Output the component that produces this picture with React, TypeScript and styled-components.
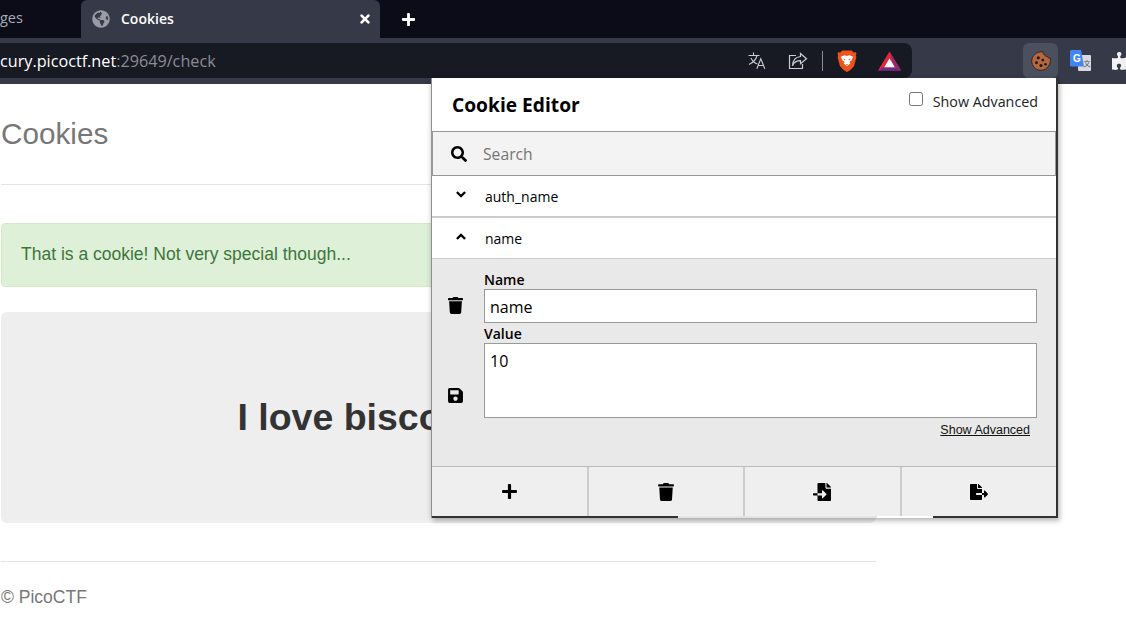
import styled, { createGlobalStyle } from "styled-components";
import {
  FaAngleDown,
  FaAngleUp,
  FaFileExport,
  FaFileImport,
  FaGlobeAmericas,
  FaPlus,
  FaPuzzlePiece,
  FaSave,
  FaSearch,
  FaTimes,
  FaTrash,
} from "react-icons/fa";

const GlobalStyle = createGlobalStyle`
  html, body {
    margin: 0;
    padding: 0;
    background: #fff;
    overflow: hidden;
  }
  #root {
    width: 1126px;
    height: 622px;
    position: relative;
    overflow: hidden;
  }
`;

function TranslateIcon() {
  return (
    <svg width="18" height="17" viewBox="0 0 18 17" fill="none" stroke="#c9cbd1" strokeWidth="1.1">
      <path d="M.5 3.500h11M5.500.5v3M9 3.500c-1 4-3.500 7-8 9M3 6c1.200 2.800 3.500 5 6.300 6" />
      <path d="M8.800 16.700l4-10 4 10M10.200 13.500h5.300" />
    </svg>
  );
}

function ShareIcon() {
  return (
    <svg width="20" height="18" viewBox="0 0 20 18" fill="none" stroke="#c9cbd1" strokeWidth="1.2">
      <path d="M8 3.500H1.500v13h13v-4.500" />
      <path d="M12.500 1.500l6 5.200-6 5v-3c-4 0-6.500 1.500-8 5 .3-5 3-8.700 8-9.200z" />
    </svg>
  );
}

function BraveIcon() {
  return (
    <svg width="20" height="22" viewBox="0 0 21 23">
      <path
        d="M5.500.5h10l2 2.200 2.200-.3.800 1.100-.7 2 .5 2.300-2.400 9-3.500 3.800-3.900 2.400-3.900-2.400-3.500-3.800-2.400-9 .5-2.300-.7-2 .8-1.100 2.200.3z"
        fill="#f1511b"
      />
      <path
        d="M4 7l4-1.500 2.500.8 2.500-.8 4 1.500-1.800 4-2.200 1.500 1 1.500-3.500 3-3.500-3 1-1.500-2.200-1.500z"
        fill="#fff"
      />
      <path d="M6.500 9l2.300.6-.6 1.300zM14.500 9l-2.300.6.6 1.300zM9 15h3l-1.500 1.300z" fill="#f1511b" />
    </svg>
  );
}

function BatIcon() {
  return (
    <svg width="23" height="20" viewBox="0 0 24 20">
      <path d="M12 0L0 20h24z" fill="#e0283c" />
      <path d="M12 0l12 20-7-4.500z" fill="#8a2a80" />
      <path d="M0 20h24l-5-3H5z" fill="#662d91" />
      <path d="M12 7.500L6.500 16.500h11z" fill="#fff" />
    </svg>
  );
}

function CookieIcon() {
  return (
    <svg width="20" height="20" viewBox="0 0 22 22">
      <path
        d="M13 .8c-.4 1.700.7 3 2.200 3 .1 1.600 1.300 2.600 2.800 2.300.3 1.200 1.500 1.800 3.200 1.500 1.300 6.500-3.500 13.600-10.200 13.600C5 21.200.8 16.500.8 11 .8 5 6.500.2 13 .8z"
        fill="#b5673d"
        stroke="#2b2320"
        strokeWidth="1"
      />
      <circle cx="8" cy="7.500" r="1.700" fill="#1f1a18" />
      <circle cx="13" cy="10" r="1.600" fill="#1f1a18" />
      <circle cx="6" cy="13" r="1.600" fill="#1f1a18" />
      <circle cx="11" cy="16" r="1.700" fill="#1f1a18" />
      <circle cx="16" cy="14.500" r="1.400" fill="#1f1a18" />
    </svg>
  );
}

function GoogleTranslateIcon() {
  return (
    <svg width="22" height="22" viewBox="0 0 22 22">
      <rect x="8" y="5" width="13" height="16" rx="1" fill="#d8dade" />
      <path d="M1.500 0h9.500l3 16.500H1.500A1.500 1.500 0 0 1 0 15V1.500A1.500 1.500 0 0 1 1.500 0z" fill="#4285f4" />
      <text x="3" y="11.500" fontFamily="Liberation Sans, sans-serif" fontWeight="700" fontSize="10" fill="#fff">
        G
      </text>
      <text x="13.500" y="16" fontFamily="Noto Sans CJK SC, sans-serif" fontSize="7" fill="#555">
        文
      </text>
    </svg>
  );
}

export default function App() {
  return (
    <>
      <GlobalStyle />
      <Chrome>
        <TabStrip>
          <OtherTab>ges</OtherTab>
          <ActiveTab>
            <FaGlobeAmericas size={18} color="#9a9ca5" />
            <TabTitle>Cookies</TabTitle>
            <FaTimes size={14} color="#fff" />
          </ActiveTab>
          <NewTab>
            <FaPlus size={15} />
          </NewTab>
        </TabStrip>
        <Toolbar>
          <UrlBar>
            <UrlText>
              cury.picoctf.net<UrlDim>:29649/check</UrlDim>
            </UrlText>
            <UrlIcons>
              <UrlIcon $left={0}>
                <TranslateIcon />
              </UrlIcon>
              <UrlIcon $left={22}>
                <ShareIcon />
              </UrlIcon>
              <UrlDivider />
              <UrlIcon $left={14}>
                <BraveIcon />
              </UrlIcon>
              <UrlIcon $left={21}>
                <BatIcon />
              </UrlIcon>
            </UrlIcons>
          </UrlBar>
          <Extensions>
            <ExtensionButton $active>
              <CookieIcon />
            </ExtensionButton>
            <ExtensionButton>
              <GoogleTranslateIcon />
            </ExtensionButton>
            <ExtensionButton>
              <PuzzleIcon size={20} color="#f1f1f3" />
            </ExtensionButton>
          </Extensions>
        </Toolbar>
      </Chrome>

      <Page>
        <PageHeader>Cookies</PageHeader>
        <Alert>That is a cookie! Not very special though...</Alert>
        <Jumbotron>
          <JumboTitle>I love biscotti cookies!</JumboTitle>
        </Jumbotron>
        <PageFooter>© PicoCTF</PageFooter>
      </Page>

      <Popup>
        <PopupHeader>
          <PopupTitle>Cookie Editor</PopupTitle>
          <AdvancedToggle>
            <Checkbox />
            Show Advanced
          </AdvancedToggle>
        </PopupHeader>
        <SearchRow>
          <FaSearch size={16} color="#000" />
          <SearchInput placeholder="Search" />
        </SearchRow>
        <CookieRow>
          <RowIcon>
            <FaAngleDown size={15} color="#000" />
          </RowIcon>
          <CookieName>auth_name</CookieName>
        </CookieRow>
        <CookieRow $open>
          <RowIcon>
            <FaAngleUp size={15} color="#000" />
          </RowIcon>
          <CookieName>name</CookieName>
        </CookieRow>
        <Details>
          <ActionColumn>
            <FaTrash size={17} color="#000" />
            <FaSave size={17} color="#000" />
          </ActionColumn>
          <Fields>
            <FieldLabel>Name</FieldLabel>
            <NameInput defaultValue="name" />
            <FieldLabel>Value</FieldLabel>
            <ValueInput defaultValue="10" />
            <AdvancedLink>Show Advanced</AdvancedLink>
          </Fields>
        </Details>
        <PopupFooter>
          <FooterButton>
            <FaPlus size={17} color="#000" />
          </FooterButton>
          <FooterButton>
            <FaTrash size={18} color="#000" />
          </FooterButton>
          <FooterButton>
            <FaFileImport size={18} color="#000" />
          </FooterButton>
          <FooterButton>
            <FaFileExport size={18} color="#000" />
          </FooterButton>
        </PopupFooter>
        <BottomEdge />
      </Popup>
    </>
  );
}

const Chrome = styled.header`
  display: flex;
  flex-direction: column;
  height: 84px;
  font-family: "Open Sans", sans-serif;
`;

const TabStrip = styled.div`
  display: flex;
  align-items: flex-start;
  height: 38px;
  background: #0b0c17;
`;

const OtherTab = styled.div`
  width: 81px;
  line-height: 36px;
  font-size: 14.500px;
  color: #a9abb3;
`;

const ActiveTab = styled.div`
  display: flex;
  align-items: center;
  gap: 11px;
  width: 299px;
  height: 38px;
  padding: 0 8px 0 11px;
  box-sizing: border-box;
  background: #363947;
  border-radius: 6px 6px 0 0;
  color: #fff;
`;

const TabTitle = styled.span`
  flex: 1;
  margin-bottom: 2px;
  font-size: 14px;
  font-weight: 600;
`;

const NewTab = styled.div`
  display: flex;
  align-items: center;
  justify-content: center;
  width: 56px;
  height: 38px;
  color: #fff;
`;

const Toolbar = styled.div`
  display: flex;
  flex: 1;
  justify-content: space-between;
  padding-top: 5px;
  box-sizing: border-box;
  background: #363947;
`;

const UrlBar = styled.div`
  display: flex;
  align-items: center;
  justify-content: space-between;
  width: 912px;
  height: 35px;
  box-sizing: border-box;
  padding-right: 11px;
  background: #171a23;
  border-radius: 0 8px 8px 0;
`;

const UrlText = styled.span`
  font-size: 16.200px;
  color: #fff;
  white-space: nowrap;
`;

const UrlDim = styled.span`
  color: #8a8c93;
`;

const UrlIcons = styled.div`
  display: flex;
  align-items: center;
`;

const UrlIcon = styled.span<{ $left: number }>`
  display: flex;
  margin-left: ${(props) => props.$left}px;
`;

const UrlDivider = styled.span`
  width: 1px;
  height: 20px;
  margin-left: 14px;
  background: #8a8c93;
`;

const Extensions = styled.div`
  display: flex;
  width: 103px;
  height: 35px;
`;

const ExtensionButton = styled.div<{ $active?: boolean }>`
  display: flex;
  align-items: center;
  justify-content: center;
  flex: none;
  width: 35px;
  height: 35px;
  margin-right: 5px;
  border-radius: 6px;
  background: ${(props) => (props.$active ? "#4c4f5d" : "transparent")};
`;

const PuzzleIcon = styled(FaPuzzlePiece)`
  margin-left: 3px;
`;

const Page = styled.main`
  width: 875px;
  margin-left: 1px;
  font-family: "Liberation Sans", Arial, sans-serif;
  color: #777;
`;

const PageHeader = styled.h3`
  margin: 0 0 38px;
  height: 100px;
  line-height: 100px;
  font-size: 29.700px;
  font-weight: 400;
  color: #777;
  border-bottom: 1px solid #e5e5e5;
`;

const Alert = styled.div`
  height: 64px;
  line-height: 60px;
  box-sizing: border-box;
  padding: 0 19px;
  margin-bottom: 25px;
  font-size: 17.500px;
  color: #3c763d;
  background: #dff0d8;
  border: 1px solid #d6e9c6;
  border-radius: 4px;
`;

const Jumbotron = styled.section`
  display: flex;
  align-items: center;
  justify-content: center;
  height: 211px;
  margin-bottom: 38px;
  background: #eee;
  border-radius: 6px;
`;

const JumboTitle = styled.h1`
  margin: 0;
  font-size: 37.500px;
  font-weight: 700;
  color: #333;
`;

const PageFooter = styled.footer`
  padding-top: 24px;
  font-size: 17.500px;
  line-height: 22px;
  color: #777;
  border-top: 1px solid #e5e5e5;
`;

const Popup = styled.aside`
  position: absolute;
  top: 78px;
  left: 431px;
  display: flex;
  flex-direction: column;
  width: 627px;
  height: 440px;
  box-sizing: border-box;
  background: #fff;
  border-left: 1px solid #8f8f8f;
  border-right: 2px solid #333;
  box-shadow: 2px 3px 5px rgba(0, 0, 0, 0.25), -2px 0 5px rgba(0, 0, 0, 0.08);
  font-family: "Open Sans", sans-serif;
  color: #000;
`;

const PopupHeader = styled.div`
  display: flex;
  justify-content: space-between;
  height: 53px;
  padding: 14px 18px 0 20px;
  box-sizing: border-box;
`;

const PopupTitle = styled.h1`
  margin: 0;
  font-size: 19.200px;
  line-height: 26px;
  font-weight: 700;
`;

const AdvancedToggle = styled.label`
  display: flex;
  align-items: flex-start;
  gap: 10px;
  font-size: 14.300px;
  line-height: 19px;
  color: #222;
`;

const Checkbox = styled.input.attrs({ type: "checkbox" })`
  width: 14px;
  height: 14px;
  margin: 0;
  appearance: none;
  background: #fff;
  border: 1px solid #767676;
  border-radius: 2.500px;
`;

const SearchRow = styled.div`
  display: flex;
  align-items: center;
  gap: 16px;
  height: 45px;
  padding: 0 0 0 18px;
  box-sizing: border-box;
  background: #f3f3f3;
  border: 1px solid #999;
  border-left-width: 2px;
  margin-left: -1px;
`;

const SearchInput = styled.input`
  flex: 1;
  padding: 0;
  border: none;
  outline: none;
  background: transparent;
  font-family: inherit;
  font-size: 15.700px;

  &::placeholder {
    color: #757575;
  }
`;

const CookieRow = styled.div<{ $open?: boolean }>`
  display: flex;
  align-items: center;
  gap: 18px;
  height: ${(props) => (props.$open ? "41px" : "42px")};
  padding-left: 23px;
  box-sizing: border-box;
  border-bottom: ${(props) => (props.$open ? "1px solid #ccc" : "2px solid #ccc")};
`;

const RowIcon = styled.span`
  display: flex;
  justify-content: center;
  width: 12px;
  margin-bottom: 4px;
`;

const CookieName = styled.span`
  font-size: 14px;
`;

const Details = styled.div`
  display: flex;
  flex: 1;
  background: #e9e9e9;
`;

const ActionColumn = styled.div`
  display: flex;
  flex-direction: column;
  align-items: center;
  gap: 73px;
  width: 48px;
  padding: 38px 0 0;
  margin-left: -1px;
  box-sizing: border-box;
`;

const Fields = styled.div`
  display: flex;
  flex: 1;
  flex-direction: column;
  padding: 11px 19px 0 5px;
`;

const FieldLabel = styled.label`
  font-size: 14px;
  line-height: 19px;
  font-weight: 600;
`;

const NameInput = styled.input`
  height: 34px;
  margin-bottom: 1px;
  padding: 1px 5px 0;
  box-sizing: border-box;
  background: #fff;
  border: 1px solid #999;
  font-family: inherit;
  font-size: 16px;
  color: #000;
`;

const ValueInput = styled.textarea`
  height: 75px;
  padding: 6px 5px 5px;
  box-sizing: border-box;
  background: #fff;
  border: 1px solid #999;
  font-family: inherit;
  font-size: 16px;
  line-height: 22px;
  color: #000;
  resize: none;
`;

const AdvancedLink = styled.a`
  align-self: flex-end;
  margin: 5px 7px 0 0;
  font-family: "Liberation Sans", Arial, sans-serif;
  font-size: 12.500px;
  line-height: 15px;
  color: #111;
  text-decoration: underline;
`;

const PopupFooter = styled.div`
  display: flex;
  height: 50px;
  box-sizing: border-box;
  background: #efefef;
  border-top: 1px solid #bbb;
`;

const FooterButton = styled.div`
  display: flex;
  align-items: center;
  justify-content: center;
  flex: 1;
  border-left: 2px solid #ccc;

  &:first-child {
    border-left: none;
  }
`;

const BottomEdge = styled.div`
  height: 2px;
  background: linear-gradient(
    to right,
    #333 0,
    #333 246px,
    #e4e4e4 246px,
    #e4e4e4 445px,
    #fff 445px,
    #fff 501px,
    #333 501px
  );
`;
